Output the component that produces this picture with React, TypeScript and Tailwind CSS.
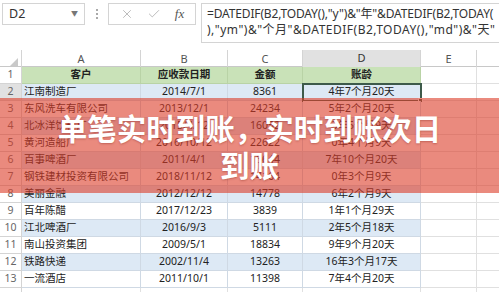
import { X, Check } from "lucide-react";

const rows = [
  { c: "江南制造厂", d: "2014/7/1", m: "8361", a: "4年7个月20天" },
  { c: "东风洗车有限公司", d: "2013/12/1", m: "24234", a: "5年2个月20天" },
  { c: "北冰洋饮料厂", d: "2015/4/12", m: "16052", a: "3年5个月9天" },
  { c: "黄河造船厂", d: "2016/10/12", m: "22622", a: "0年4个月9天" },
  { c: "百事啤酒厂", d: "2011/4/1", m: "15644", a: "7年10个月20天" },
  { c: "钢铁建材投资有限公司", d: "2018/11/12", m: "14164", a: "0年3个月9天" },
  { c: "美丽金融", d: "2012/12/12", m: "14778", a: "6年2个月9天" },
  { c: "百年陈醋", d: "2017/12/23", m: "3839", a: "1年1个月29天" },
  { c: "江北啤酒厂", d: "2016/9/3", m: "5111", a: "2年5个月18天" },
  { c: "南山投资集团", d: "2009/5/1", m: "18834", a: "9年9个月20天" },
  { c: "铁路快递", d: "2002/11/4", m: "13263", a: "16年3个月17天" },
  { c: "一流酒店", d: "2011/10/1", m: "11398", a: "7年4个月20天" },
];

const cols = "grid grid-cols-[22px_119px_87px_75px_118px_56px_1fr]";

export default function App() {
  return (
    <div
      className="relative w-[499px] h-[292px] overflow-hidden bg-white text-[#222]"
      style={{ fontFamily: '"Noto Sans", "Noto Sans CJK SC", sans-serif' }}
    >
      {/* Formula bar */}
      <div className="flex items-start h-[50px] pt-[3px] pl-[2px]">
        <div className="shrink-0 flex items-center justify-between w-[83px] h-[22px] border border-[#d4d4d4] pl-[6px] pr-[6px] text-[12.5px] text-[#333]">
          <span>D2</span>
          <span className="text-[7px] text-[#777]">▼</span>
        </div>
        <div className="shrink-0 flex flex-col gap-[2px] items-center w-[23px] pt-[6px]">
          <span className="w-[2px] h-[2px] bg-[#aaa]" />
          <span className="w-[2px] h-[2px] bg-[#aaa]" />
          <span className="w-[2px] h-[2px] bg-[#aaa]" />
        </div>
        <div className="shrink-0 flex items-center justify-around w-[88px] h-[22px] border border-[#d4d4d4] px-[4px]">
          <X size={14} strokeWidth={1.3} className="text-[#a8a8a8]" />
          <Check size={14} strokeWidth={1.3} className="text-[#a8a8a8]" />
          <span
            className="text-[13px] italic text-[#555]"
            style={{ fontFamily: '"Liberation Serif", serif' }}
          >
            fx
          </span>
        </div>
        <div className="ml-[5px] min-w-0 flex-1 h-[40px] border border-r-0 border-[#d4d4d4] pl-[5px] pt-[2px] text-[12px] leading-[16px] text-[#333] whitespace-nowrap overflow-hidden">
          <div className="tracking-[-0.15px]">=DATEDIF(B2,TODAY(),"y")&amp;"年"&amp;DATEDIF(B2,TODAY(</div>
          <div className="tracking-[0.5px]">),"ym")&amp;"个月"&amp;DATEDIF(B2,TODAY(),"md")&amp;"天"</div>
        </div>
      </div>

      {/* Column headers */}
      <div className={`${cols} h-[17px] text-[11px] text-[#555] border-b border-[#c8c8c8]`}>
        <div className="relative border-r border-[#d4d4d4]">
          <svg width="8" height="8" className="absolute right-[3px] bottom-[3px]">
            <polygon points="8,0 8,8 0,8" fill="#c9c9c9" />
          </svg>
        </div>
        <div className="flex items-center justify-center border-r border-[#d4d4d4]">A</div>
        <div className="flex items-center justify-center border-r border-[#d4d4d4]">B</div>
        <div className="flex items-center justify-center border-r border-[#d4d4d4]">C</div>
        <div className="flex items-center justify-center border-r border-[#d4d4d4] bg-[#e1e1e1] border-b-2 border-b-[#217346] text-[#333]">D</div>
        <div className="flex items-center justify-center border-r border-[#d4d4d4]">E</div>
        <div />
      </div>

      {/* Header row */}
      <div className={`${cols} h-[17px] text-[10.5px]`}>
        <div className="flex items-center justify-center border-r border-b border-[#d4d4d4] text-[#666]">1</div>
        <div className="flex items-center justify-center bg-[#c9e2b8] border-r border-b border-[#b9d3a6] font-bold">客户</div>
        <div className="flex items-center justify-center bg-[#c9e2b8] border-r border-b border-[#b9d3a6] font-bold">应收款日期</div>
        <div className="flex items-center justify-center bg-[#c9e2b8] border-r border-b border-[#b9d3a6] font-bold">金额</div>
        <div className="flex items-center justify-center bg-[#c9e2b8] border-r border-b border-[#b9d3a6] font-bold">账龄</div>
        <div className="border-r border-b border-[#e0e0e0]" />
        <div className="border-b border-[#e0e0e0]" />
      </div>

      {/* Data rows */}
      {rows.map((r, i) => {
        const band = i % 2 === 0 ? "bg-[#dde9f5]" : "bg-white";
        return (
          <div key={i} className={`${cols} h-[17px] text-[10.5px] text-[#222]`}>
            <div
              className={`flex items-center justify-center border-r border-b border-[#d4d4d4] text-[#666] ${
                i === 0 ? "bg-[#e1e1e1]" : ""
              }`}
            >
              {i + 2}
            </div>
            <div className={`flex items-center pl-[2px] whitespace-nowrap border-r border-b border-[#cfd9e4] ${band}`}>{r.c}</div>
            <div className={`flex items-center justify-center border-r border-b border-[#cfd9e4] ${band}`}>{r.d}</div>
            <div className={`flex items-center justify-center border-r border-b border-[#cfd9e4] ${band}`}>{r.m}</div>
            <div
              className={`relative flex items-center justify-center border-r border-b border-[#cfd9e4] ${band} ${
                i === 0 ? "outline-2 outline-[#3d5a4a] -outline-offset-1" : ""
              }`}
            >
              {r.a}
              {i === 0 && <span className="absolute -right-[3px] -bottom-[3px] w-[5px] h-[5px] bg-[#3d5a4a] border border-white" />}
            </div>
            <div className="border-r border-b border-[#e0e0e0]" />
            <div className="border-b border-[#e0e0e0]" />
          </div>
        );
      })}
      <div className={`${cols} h-[17px]`}>
        <div className="border-r border-[#d4d4d4]" />
        <div className="border-r border-[#e0e0e0]" />
        <div className="border-r border-[#e0e0e0]" />
        <div className="border-r border-[#e0e0e0]" />
        <div className="border-r border-[#e0e0e0]" />
        <div className="border-r border-[#e0e0e0]" />
        <div />
      </div>

      {/* Title banner over the sheet */}
      <div className="absolute left-0 right-0 top-[98px] h-[95px] bg-[rgba(220,60,40,0.6)] flex items-center justify-center">
        <div
          className="w-[392px] text-center text-white font-bold text-[29.5px] leading-[37px]"
          style={{ fontFamily: '"Noto Sans CJK SC", sans-serif', textShadow: "0 1px 2px rgba(120,30,20,0.35)" }}
        >
          单笔实时到账，实时到账次日到账
        </div>
      </div>
    </div>
  );
}
